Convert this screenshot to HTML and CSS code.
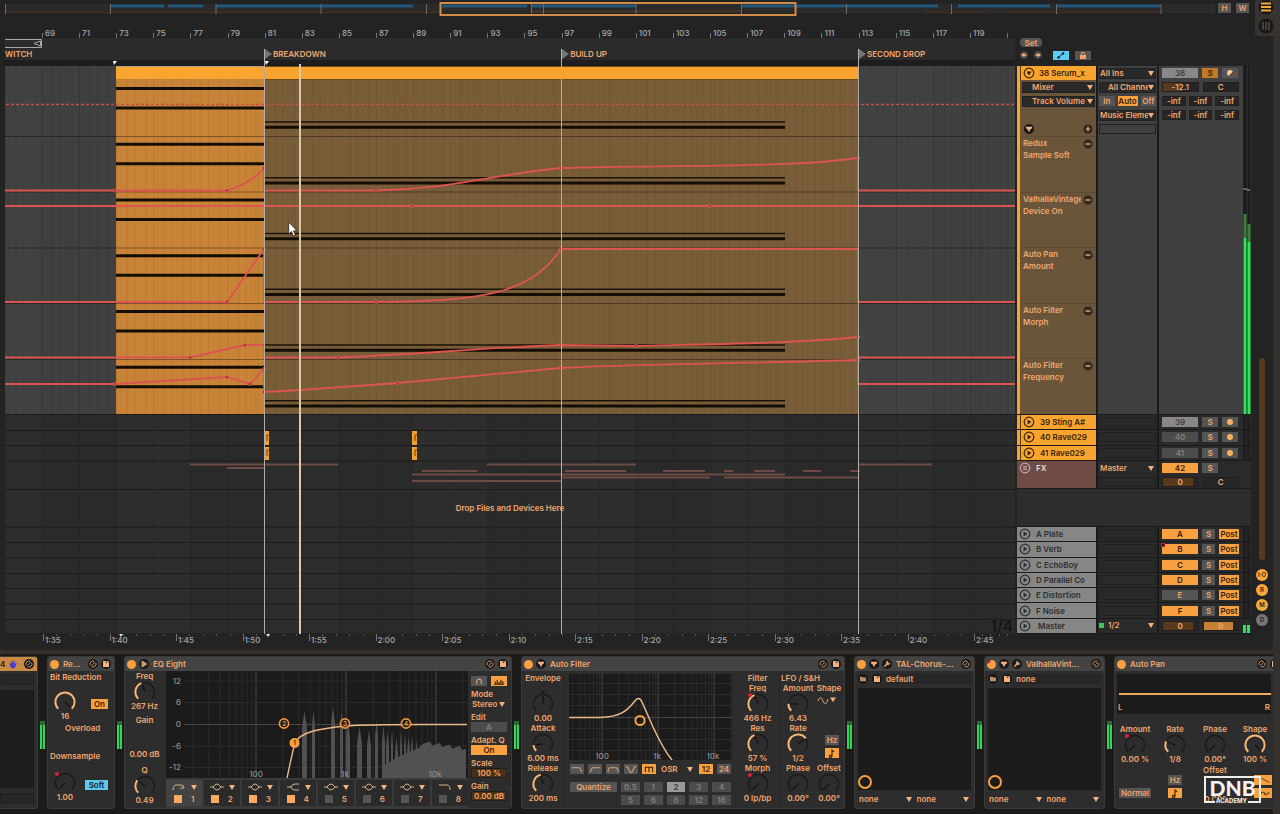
FILE: index.html
```html
<!DOCTYPE html>
<html lang="en">
<head>
<meta charset="utf-8">
<title>Arrangement</title>
<link rel="stylesheet" href="styles.css">
</head>
<body>
<svg class="sprite" aria-hidden="true">
  <symbol id="i-play" viewBox="0 0 12 12"><circle cx="6" cy="6" r="4.8" fill="none" stroke="currentColor" stroke-width="1.2"/><path d="M4.6 3.6v4.8L8.4 6z" fill="currentColor"/></symbol>
  <symbol id="i-fold" viewBox="0 0 12 12"><circle cx="6" cy="6" r="4.8" fill="none" stroke="currentColor" stroke-width="1.2"/><path d="M3.4 4.6h5.2L6 8.4z" fill="currentColor"/></symbol>
  <symbol id="i-group" viewBox="0 0 12 12"><circle cx="6" cy="6" r="4.8" fill="none" stroke="currentColor" stroke-width="1.2"/><path d="M4 4.5h4M4 6h4M4 7.5h4" stroke="currentColor" stroke-width=".9"/></symbol>
  <symbol id="i-swap" viewBox="0 0 10 10"><circle cx="5" cy="5" r="5" fill="#191919"/><path d="M2.2 6.2A3 3 0 0 1 6.4 2.4M7.8 3.8A3 3 0 0 1 3.6 7.6M3.6 6.6l3-3.2" fill="none" stroke="#c89a74" stroke-width="1"/></symbol>
  <symbol id="i-save" viewBox="0 0 10 10"><circle cx="5" cy="5" r="5" fill="#191919"/><path d="M2 2h5l1 1v5H2z" fill="#f5b27c"/><path d="M4.800 2.400h1.600v1.600H4.800z" fill="#4a3626"/></symbol>
  <symbol id="i-down" viewBox="0 0 10 10"><circle cx="5" cy="5" r="5" fill="#191919"/><path d="M2 2.800h6v1.400L5.800 6v1.600H4.200V6L2 4.200z" fill="#f0b27e"/></symbol>
  <symbol id="i-right" viewBox="0 0 10 10"><circle cx="5" cy="5" r="5" fill="#191919"/><path d="M2.500 2h1.800L8.600 5 4.300 8H2.500z" fill="#c89a74"/></symbol>
  <symbol id="i-wrench" viewBox="0 0 10 10"><circle cx="5" cy="5" r="5" fill="#191919"/><path d="M2.4 7.6L5.6 4.4" stroke="#d5a078" stroke-width="1.5"/><path d="M7.8 3.6A2 2 0 1 1 6.4 2.2L5.9 3.5l.6.6z" fill="#d5a078"/></symbol>
  <symbol id="i-folder" viewBox="0 0 10 10"><circle cx="5" cy="5" r="5" fill="#191919"/><path d="M2 2.800h2.400l.8.8H8V7.200H2z" fill="#b98f6e"/></symbol>
  <symbol id="i-plus" viewBox="0 0 10 10"><circle cx="5" cy="5" r="4.6" fill="#33291f"/><path d="M2.8 5h4.4M5 2.8v4.4" stroke="#d9b38e" stroke-width="1.2"/></symbol>
  <symbol id="i-minus" viewBox="0 0 10 10"><circle cx="5" cy="5" r="4.6" fill="#33291f"/><path d="M2.6 5h4.8" stroke="#d9b38e" stroke-width="1.4"/></symbol>
  <symbol id="i-note" viewBox="0 0 10 8"><path d="M5 6.4V1l2 1.6M5 6.4a1.2 1 0 1 1-1-.9z" fill="none" stroke="#3a2205" stroke-width="1"/></symbol>
</svg>

<header class="top">
  <svg class="overview" viewBox="5 0 1212 18" preserveAspectRatio="none" aria-hidden="true">
    <rect x="5" y="4" width="1210" height="9" fill="#2b2b2b"/>
    <path d="M5 12.5H440M925 12.5h60M1003 12.5h158" stroke="#442e23" stroke-width="1.500"/>
    <path d="M111 6h53M168 6h35M216 6h197M442 6h85M532 6h104M742 6h196M958 6h92M1056 6h104" stroke="#22567b" stroke-width="3"/>
    <path d="M532 11.5h104M636 11h106" stroke="#503529" stroke-width="1.500"/>
    <path d="M5.500 4v10M110.500 4v10M216 4v10M321 4v10M426.500 4v10M531.500 4v10M543.500 4v10M636 4v10M741.500 4v10M846.500 4v10M951.500 4v10M1056.500 4v10M1161 4v10" stroke="#6b6b6b"/>
    <rect x="440.500" y="3" width="355" height="12" fill="none" stroke="#cf8b48" stroke-width="2"/>
  </svg>
  <div class="zoomers"><button class="btn">H</button><button class="btn">W</button></div>
  <div class="rail-top">
    <svg viewBox="0 0 25 36" aria-hidden="true"><circle cx="11" cy="7" r="7.500" fill="#191919"/><path d="M6 3.500h10M6 7h10M6 10.500h10" stroke="#f5a83a" stroke-width="2"/><circle cx="11" cy="26" r="7.500" fill="#191919"/><path d="M8 22v8M11 22v8M14 22v8" stroke="#45403b" stroke-width="2"/></svg>
  </div>
</header>

<main class="arrange">
  <section class="canvas">
    <div class="bars" id="bars"></div>
    <div class="scrub">
      <svg class="loop" viewBox="0 0 37 9" aria-hidden="true"><path d="M0 .5h36.500v8H0M35.500 2v5L29 4.500z" fill="none" stroke="#a8a8a8"/></svg>
      <span class="locname">WITCH</span>
    </div>
    <div class="cue"></div>
    <svg class="lanes" viewBox="5 66 1010 568" preserveAspectRatio="none" aria-hidden="true">
      <defs>
        <pattern id="hatch" width="37.150" height="20" patternUnits="userSpaceOnUse" x="41.600">
          <path d="M.5 0v20M11.500 0v20M18.500 0v20M30.500 0v20" stroke="#000" stroke-opacity=".08"/>
          <path d="M4.500 0v20M9.500 0v20M23.500 0v20M27.500 0v20" stroke="#000" stroke-opacity=".04"/>
        </pattern>
        <pattern id="grid" width="148.600" height="20" patternUnits="userSpaceOnUse" x="115.900">
          <path d="M.5 0v20M37.600 0v20M74.800 0v20M111.900 0v20" stroke="#000" stroke-opacity=".09"/>
          <rect width="74" height="20" fill="#fff" fill-opacity=".012"/>
        </pattern>
      </defs>
      <rect x="5" y="66" width="1010" height="568" fill="#2a2a2a"/>
      <rect x="5" y="66" width="1010" height="348" fill="#404040"/>
      <rect x="5" y="66" width="1010" height="568" fill="url(#grid)"/>
      <rect x="5" y="66" width="1010" height="348" fill="url(#hatch)"/>
      <rect x="116" y="79" width="148" height="335" fill="#c98438"/>
      <rect x="116" y="79" width="148" height="335" fill="url(#hatch)"/>
      <rect x="264" y="79" width="594" height="335" fill="#795d38"/>
      <rect x="264" y="79" width="594" height="335" fill="url(#hatch)"/>
      <rect x="116" y="67" width="742" height="12" fill="#f9a42f"/>
      <path d="M116 66.500h148" stroke="#a6a29a"/>
      <path d="M264 66.500h594M264 79.500h594" stroke="#6a4a1c"/>
      <g id="notes"></g>
      <path d="M5 136.500h1010M5 192h1010M5 248h1010M5 303.500h1010M5 359.500h1010" stroke="#000" stroke-opacity=".35"/>
      <path d="M5 414.500h1010M5 430.500h1010M5 445.500h1010M5 461h1010M5 489.500h1010M5 527h1010M5 542.500h1010M5 558h1010M5 573.500h1010M5 588.500h1010M5 604h1010M5 619.500h1010M5 634h1010" stroke="#1c1c1c"/>
      <path d="M6 104.500h1009" stroke="#c25148" stroke-width="1.400" stroke-dasharray="3 2"/>
      <g fill="none" stroke="#dc5450" stroke-width="1.800">
        <path d="M5 190.500H227Q252 183 264 168V190.500H376C450 189 490 175 561 168C660 165 790 168 858 158V190.500H1015"/>
        <path d="M5 206H1015"/>
        <path d="M5 302H227L264 249V302H376C480 301 530 295 561 249H858V302H1015"/>
        <path d="M5 357.500H190L245 345H264V357.500H338C410 355 480 348 561 345L636 346C720 344 800 343 858 337V357.500H1015"/>
        <path d="M5 384H115L227 377L250 384L264 369V392L301 390L398 383L561 368C640 364 760 363 858 360V384H1015"/>
      </g>
      <g id="dots" fill="#7a3a2c" stroke="#e0574f"></g>
      <path d="M264 431h5v14h-5zM264 447h5v13h-5zM412 431h5v14h-5zM412 447h5v13h-5z" fill="#f0a02f"/>
      <path d="M266.500 435h2M267 435v6M266.500 450h2M267 450v6M415 435h2M415 435v6M415 450h2M415 450v6" stroke="#5e3f0e"/>
      <path d="M190 464.500H338M487 464.500H636M858 464.500H932M227 468H264M422 471H477M565 471H626M663 471H705M724 471H733M754 471H775M803 471H821M850 471H860M412 474.500H785M562 477.500H710M724 477.500H858M412 481H562" stroke="#6e4b45" stroke-width="2"/>
    </svg>
    <div class="times" id="times"></div>
    <div class="locator" style="left:25.64%"><span>BREAKDOWN</span></div>
    <div class="locator" style="left:55.07%"><span>BUILD UP</span></div>
    <div class="locator" style="left:84.45%"><span>SECOND DROP</span></div>
    <div class="playhead" style="left:29.15%"></div>
    <i class="start" style="left:10.7%"></i><i class="start" style="left:25.7%"></i>
    <i class="endmark" style="left:11.3%"></i><i class="endmark" style="left:25.8%"></i>
    <p class="drop">Drop Files and Devices Here</p>
    <span class="snap">1/4</span>
    <svg class="pointer" viewBox="0 0 10 16" aria-hidden="true"><path d="M.7 1v12l2.700-2.500 2 4.500 2-1-2-4.200H9z" fill="#fff" stroke="#2b2218" stroke-width=".8"/></svg>
  </section>

  <section class="tracks">
    <div class="setbar">
      <button class="btn set">Set</button>
      <div class="setrow">
        <button class="dotbtn" aria-label="Previous locator"><svg viewBox="0 0 8 8"><path d="M1 4l3.500-2.500v1.800H6.500v1.400H4.500v1.800z" fill="#f0b27e"/></svg></button><button class="dotbtn" aria-label="Next locator"><svg viewBox="0 0 8 8"><path d="M7 4L3.500 1.500v1.800H1.500v1.400h2v1.800z" fill="#f0b27e"/></svg></button>
        <button class="mode on" aria-label="Automation mode"><svg viewBox="0 0 16 9"><path d="M5 7l5-4.500" stroke="#123" stroke-width="1"/><circle cx="5.500" cy="6.500" r="1.300" fill="#123"/><circle cx="10" cy="2.500" r="1.300" fill="#123"/></svg></button>
        <button class="mode" aria-label="Lock envelopes"><svg viewBox="0 0 16 9"><path d="M5 4h6v4H5z" fill="#eda36a"/><path d="M6.300 4V3a1.700 1.700 0 0 1 3.400 0v1" fill="none" stroke="#eda36a"/></svg></button>
      </div>
    </div>
    <div class="tracklist">
      <div class="track main">
        <div class="head">
          <div class="title"><svg class="ic"><use href="#i-fold"/></svg>38 Serum_x</div>
          <div class="line"><span class="sel pad"><select aria-label="Device"><option>Mixer</option></select></span></div>
          <div class="line"><span class="sel pad"><select aria-label="Parameter"><option>Track Volume</option></select></span></div>
          <div class="line"></div>
          <div class="line ends"><svg class="ic sm"><use href="#i-down"/></svg><svg class="ic sm"><use href="#i-plus"/></svg></div>
          <div class="auto" id="auto"></div>
        </div>
        <div class="io">
          <div class="line"><span class="sel"><select aria-label="Audio from"><option>All Ins</option></select></span></div>
          <div class="line"><span class="sel ind"><select aria-label="Input channel"><option>All Channels</option></select></span></div>
          <div class="line tri"><button class="btn">In</button><button class="btn hot">Auto</button><button class="btn">Off</button></div>
          <div class="line"><span class="sel"><select aria-label="Audio to"><option>Music Elements</option></select></span></div>
          <div class="line"><span class="slot"></span></div>
        </div>
        <div class="mix">
          <div class="line"><button class="btn act grey">38</button><button class="btn solo hotsolo">S</button><button class="btn rec" aria-label="Arm"><i class="striped"></i></button></div>
          <div class="line"><span class="val vol">-12.1</span><span class="val">C</span></div>
          <div class="line three"><span class="val">-inf</span><span class="val">-inf</span><span class="val">-inf</span></div>
          <div class="line three"><span class="val">-inf</span><span class="val">-inf</span><span class="val">-inf</span></div>
          <svg class="bigmeter" viewBox="1242 66 9 348" preserveAspectRatio="none" aria-hidden="true"><path d="M1243 66h4v348h-4zM1247.500 66h3v348h-3z" fill="#1d1d1d"/><path d="M1243 189h4M1247 190h3" stroke="#aaa"/><path d="M1243.500 214h3v24h-3zM1247.500 224h3v18h-3z" fill="#3f7f3c"/><path d="M1243.500 238h3v176h-3zM1247.500 242h3v172h-3z" fill="#2ee55c"/></svg>
        </div>
      </div>
      <div class="grp orange" id="clips"></div>
      <div class="track fx">
        <div class="head"><div class="title"><svg class="ic"><use href="#i-group"/></svg>FX</div></div>
        <div class="io"><div class="line"><span class="sel bare"><select aria-label="FX output"><option>Master</option></select></span></div><div class="line"><span class="slot"></span></div></div>
        <div class="mix"><div class="line"><button class="btn act hot">42</button><button class="btn solo">S</button></div><div class="line"><span class="val level">0</span><span class="val">C</span></div></div>
      </div>
      <div class="void"></div>
      <div class="grp" id="returns"></div>
    </div>
    <div class="foot"></div>
  </section>

  <aside class="gutter">
    <i class="thumb"></i>
    <button>I·O</button><button>R</button><button>M</button><button class="off">D</button>
  </aside>
</main>

<section class="devices">
  <article class="device d-cut">
    <header class="gold">4<svg class="hand" viewBox="0 0 10 10"><path d="M1 4l2 1V1.500l1.200 2.500L5 .5l.8 3.500L7.500 1.500 7 5l2-1-2 4.500L5 9.500 3 8.500z" fill="#4a38d8"/></svg><svg class="ico end"><use href="#i-swap"/></svg></header>
    <div class="cutbody"><i></i><b></b><i></i></div>
  </article>
  <i class="meter"></i>

  <article class="device d-redux">
    <header><i class="power"></i><h2>Re...</h2><svg class="ico end"><use href="#i-swap"/></svg><svg class="ico"><use href="#i-save"/></svg></header>
    <div class="body redux">
      <h3>Bit Reduction</h3>
      <div class="pair"><div class="knob" data-value="16" data-v="1" data-name="Bits"></div><button class="btn hot">On</button></div>
      <p class="over">Overload</p>
      <h3>Downsample</h3>
      <div class="pair"><div class="knob" data-value="1.00" data-v="0" data-dot="1" data-name="Downsample"></div><button class="btn cyan">Soft</button></div>
    </div>
  </article>
  <i class="meter"></i>

  <article class="device d-eq">
    <header><i class="power"></i><svg class="ico"><use href="#i-right"/></svg><h2>EQ Eight</h2><svg class="ico end"><use href="#i-swap"/></svg><svg class="ico"><use href="#i-save"/></svg></header>
    <div class="eqbody">
      <div class="eqleft">
        <div class="knob" data-label="Freq" data-value="267 Hz" data-v=".42"></div>
        <div class="plain"><span>Gain</span><span>0.00 dB</span></div>
        <div class="knob" data-label="Q" data-value="0.49" data-v=".3"></div>
      </div>
      <div class="eqmid">
        <svg class="graph" viewBox="166 672 302 107" role="img" aria-label="EQ curve">
          <rect x="166" y="672" width="302" height="107" fill="#1b1b1b"/>
          <g data-grid="256,90,192,467,672,779"></g>
          <path d="M184 682h283M184 703.500h283M184 747h283M184 768.500h283" stroke="#2a2a2a"/><path d="M184 725.500h283" stroke="#484848"/>
          <g id="spectrum" fill="#515151"></g>
          <path d="M287 779C290 765 292 755 295 744C300 733 318 730 345 727C370 725 400 725.500 467 725.500" fill="none" stroke="#e9b987" stroke-width="1.400"/>
          <circle cx="294.500" cy="744" r="5" fill="#f9a040"/>
          <g fill="#1b1b1b" fill-opacity=".6" stroke="#f2953a" stroke-width="1.600"><circle cx="284" cy="724.500" r="4.600"/><circle cx="345" cy="724.500" r="4.600"/><circle cx="406" cy="724.500" r="4.600"/></g>
          <g class="gnum"><text x="294.500" y="746" fill="#2b1a08">1</text><text x="284" y="727">2</text><text x="345" y="727">3</text><text x="406" y="727">4</text></g>
          <g class="glab r"><text x="181" y="685">12</text><text x="181" y="706">6</text><text x="181" y="728">0</text><text x="181" y="750">-6</text><text x="181" y="771">-12</text></g>
          <g class="glab"><text x="256" y="778">100</text><text x="345" y="778">1k</text><text x="435" y="778">10k</text></g>
        </svg>
        <div class="bands" id="bands"></div>
      </div>
      <div class="eqright">
        <div class="duo"><button class="btn" aria-label="Audition"><svg viewBox="0 0 15 9"><path d="M5 7V4.500a2.500 2.500 0 0 1 5 0V7M5 5v2.500M10 5v2.500" fill="none" stroke="#d5a078" stroke-width="1.200"/></svg></button><button class="btn hot" aria-label="Analyze"><svg viewBox="0 0 15 9"><path d="M2 7.500h11M3.500 7V4.500M5.500 7V3M7.500 7V5M9.500 7V2.500M11.500 7V4" stroke="#3a2205" stroke-width="1.200"/></svg></button></div>
        <h3>Mode</h3><span class="sel bare"><select aria-label="Mode"><option>Stereo</option></select></span>
        <h3>Edit</h3><button class="btn dim">A</button>
        <h3>Adapt. Q</h3><button class="btn hot">On</button>
        <h3>Scale</h3><span class="val brown">100 %</span>
        <h3>Gain</h3><span class="val brown">0.00 dB</span>
      </div>
    </div>
  </article>
  <i class="meter"></i>

  <article class="device d-filter">
    <header><i class="power"></i><svg class="ico"><use href="#i-down"/></svg><h2>Auto Filter</h2><svg class="ico end"><use href="#i-swap"/></svg><svg class="ico"><use href="#i-save"/></svg></header>
    <div class="fbody">
      <div class="kcol edge">
        <h3>Envelope</h3>
        <div class="knob nolabel" data-value="0.00" data-v="-1" data-name="Envelope amount"></div>
        <div class="knob" data-label="Attack" data-value="6.00 ms" data-v=".14"></div>
        <div class="knob" data-label="Release" data-value="200 ms" data-v=".45"></div>
      </div>
      <div class="fmid">
        <svg class="graph" viewBox="569 675 163 86" role="img" aria-label="Filter curve">
          <rect x="569" y="675" width="163" height="86" fill="#1b1b1b"/>
          <g data-grid="602,56,570,731,675,761"></g>
          <path d="M569 684.500h163M569 695.500h163M569 706.500h163M569 729.500h163M569 740.500h163M569 751.500h163" stroke="#2c2c2c"/><path d="M569 718.500h163" stroke="#444"/>
          <path d="M569 718.500h31C620 718 627 712 634 703Q639 696 642 703L653 728C660 743 667 755 672 761" fill="none" stroke="#e9b987" stroke-width="1.500"/>
          <circle cx="640" cy="721.500" r="4.600" fill="none" stroke="#f9a040" stroke-width="2"/>
          <g class="glab"><text x="602" y="760">100</text><text x="657" y="760">1k</text><text x="713" y="760">10k</text></g>
        </svg>
        <div class="ftypes">
          <button class="btn" aria-label="Lowpass"><svg viewBox="0 0 14 10"><path d="M1 3h8q2 0 3 5"/></svg></button>
          <button class="btn" aria-label="Highpass"><svg viewBox="0 0 14 10"><path d="M2 8q1-5 3-5h8"/></svg></button>
          <button class="btn" aria-label="Bandpass"><svg viewBox="0 0 14 10"><path d="M1.500 8q0-5 2-5h7q2 0 2 5"/></svg></button>
          <button class="btn" aria-label="Notch"><svg viewBox="0 0 14 10"><path d="M1 2h2l3 6h2l3-6h2"/></svg></button>
          <button class="btn hot" aria-label="Morph"><svg viewBox="0 0 14 10"><path d="M3 8V2.500h8V8M7 3v5"/></svg></button>
          <span class="sel bare"><select aria-label="Circuit"><option>OSR</option></select></span>
          <button class="btn hot">12</button><button class="btn">24</button>
        </div>
        <div class="quant"><button class="btn">Quantize</button><button class="btn dim">0.5</button><button class="btn dim">1</button><button class="btn pick">2</button><button class="btn dim">3</button><button class="btn dim">4</button>
        <span></span><button class="btn dim">5</button><button class="btn dim">6</button><button class="btn dim">8</button><button class="btn dim">12</button><button class="btn dim">16</button></div>
      </div>
      <div class="kcol">
        <h3>Filter</h3>
        <div class="knob" data-label="Freq" data-value="466 Hz" data-v=".42" data-dot="1"></div>
        <div class="knob" data-label="Res" data-value="57 %" data-v=".42"></div>
        <div class="knob" data-label="Morph" data-value="0 lp/bp" data-v="0" data-dot="1"></div>
      </div>
      <div class="lfo">
        <h3>LFO / S&amp;H</h3>
        <div class="knob" data-label="Amount" data-value="6.43" data-v=".17"></div>
        <div class="shape"><span>Shape</span><svg viewBox="0 0 20 8"><path d="M1 5q2.500-7 5 0t5-2" fill="none" stroke="#d5a078"/><path d="M13 1.500h6L16 6z" fill="#f0b27e"/></svg></div>
        <div class="knob" data-label="Rate" data-value="1/2" data-v=".7"></div>
        <div class="stack"><button class="btn">Hz</button><button class="btn hot" aria-label="Sync"><svg viewBox="0 0 10 8"><use href="#i-note"/></svg></button></div>
        <div class="knob" data-label="Phase" data-value="0.00°" data-v="0"></div>
        <div class="knob" data-label="Offset" data-value="0.00°" data-v="0"></div>
      </div>
    </div>
  </article>
  <i class="meter"></i>

  <article class="device d-plug">
    <header><i class="power"></i><svg class="ico"><use href="#i-down"/></svg><svg class="ico"><use href="#i-wrench"/></svg><h2>TAL-Chorus-...</h2><svg class="ico end"><use href="#i-swap"/></svg></header>
    <div class="plug"><div class="preset"><svg class="ico"><use href="#i-folder"/></svg><svg class="ico"><use href="#i-save"/></svg><span>default</span></div>
    <div class="xy"></div>
    <div class="two"><span class="sel bare"><select aria-label="Chorus X"><option>none</option></select></span><span class="sel bare"><select aria-label="Chorus Y"><option>none</option></select></span></div></div>
  </article>
  <i class="meter"></i>

  <article class="device d-plug">
    <header><i class="power mapped"></i><svg class="ico"><use href="#i-down"/></svg><svg class="ico"><use href="#i-wrench"/></svg><h2>ValhallaVint...</h2><svg class="ico end"><use href="#i-swap"/></svg></header>
    <div class="plug"><div class="preset"><svg class="ico"><use href="#i-folder"/></svg><svg class="ico"><use href="#i-save"/></svg><span>none</span></div>
    <div class="xy"></div>
    <div class="two"><span class="sel bare"><select aria-label="Reverb X"><option>none</option></select></span><span class="sel bare"><select aria-label="Reverb Y"><option>none</option></select></span></div></div>
  </article>
  <i class="meter"></i>

  <article class="device d-pan">
    <header><i class="power"></i><h2>Auto Pan</h2><svg class="ico end"><use href="#i-swap"/></svg><svg class="ico"><use href="#i-save"/></svg></header>
    <div class="panner">
      <div class="wave"><i></i><span>L</span><span>R</span></div>
      <div class="prow">
        <div class="knob" data-label="Amount" data-value="0.00 %" data-v="0" data-dot="1"></div>
        <div class="knob" data-label="Rate" data-value="1/8" data-v=".25"></div>
        <div class="knob" data-label="Phase" data-value="0.00°" data-v="0"></div>
        <div class="knob" data-label="Shape" data-value="100 %" data-v="1"></div>
      </div>
      <div class="prow low">
        <div class="cell bottom"><button class="btn normal">Normal</button></div>
        <div class="cell bottom"><button class="btn">Hz</button><button class="btn hot" aria-label="Sync"><svg viewBox="0 0 10 8"><use href="#i-note"/></svg></button></div>
        <div class="cell"><span>Offset</span><span class="last">0.00°</span></div>
        <div class="cell bottom wide"><button class="btn hot" aria-label="Saw"><svg viewBox="0 0 18 9"><path d="M6 1l11 6" stroke="#3a2205"/></svg></button><button class="btn hot" aria-label="Random"><svg viewBox="0 0 18 9"><path d="M4 5h3V3h4v3h3V4h4" fill="none" stroke="#3a2205"/></svg></button></div>
      </div>
      <div class="logo"><b>DNB</b><small>ACADEMY</small></div>
    </div>
  </article>
</section>
<script src="app.js"></script>
</body>
</html>
```
FILE: styles.css
```css
* { box-sizing: border-box; }
body {
  margin: 0; min-height: 100vh; display: flex; flex-direction: column;
  background: #34302b; color: #f0a76e; overflow: hidden;
  font: 600 8px/10px Inter, "Open Sans", sans-serif; white-space: nowrap;
}
h2, h3, p { margin: 0; font: inherit; }
button, select { font: inherit; color: inherit; border: 0; padding: 0; background: none; border-radius: 0; }
svg { display: block; }
.sprite { position: absolute; width: 0; height: 0; }
.btn { background: #555; color: #eda36a; height: 10px; text-align: center; overflow: hidden; display: grid; place-content: center; }
.btn svg { width: 14px; height: 9px; }
.hot { background: #f9a040; color: #3a2205; }
.cyan { background: #5cc9ee; color: #123; }
.dim { background: #4c4c4c; color: #808080; }
.pick { background: #999; color: #333; }
.sel { position: relative; display: block; flex: 1; min-width: 0; height: 11px; background: #2a2a2a; border: 1px solid #222; }
.sel select { appearance: none; display: block; width: calc(100% - 7px); height: 9px; line-height: 9px; overflow: hidden; outline: 0; }
.sel::after { content: ""; position: absolute; right: 1px; top: 2px; border: 3px solid transparent; border-top: 5px solid #f0b27e; border-bottom: 0; }
.sel.bare { background: none; border-color: transparent; }

/* overview */
.top { display: flex; height: 18px; background: #232323; padding-left: 5px; }
.overview { flex: 1; min-width: 0; height: 18px; }
.zoomers { display: flex; gap: 5px; padding: 3px 0 0 1px; width: 38px; }
.zoomers .btn { width: 13px; }
.rail-top { width: 25px; height: 18px; background: #38332e; position: relative; z-index: 2; }
.rail-top svg { width: 25px; height: 36px; background: #38332e; border-bottom-left-radius: 3px; }

/* arrangement */
.arrange { display: flex; background: #232323; padding-left: 5px; margin-right: 7px; border-radius: 0 0 4px 4px; padding-bottom: 2px; }
.canvas { flex: 1; min-width: 0; position: relative; display: flex; flex-direction: column; margin-right: 2px; }
.bars { display: grid; grid-template-columns: 37px repeat(26, 1fr) 8px; height: 20px; color: #a9a9a9; font-weight: 500; align-items: end; }
.bars span { height: 10px; padding-left: 3px; line-height: 10px; background: linear-gradient(#777, #777) 0 5px / 1px 5px no-repeat; }
.scrub { height: 22px; background: #2b2b2b; padding-top: 1px; }
.loop { width: 37px; height: 9px; }
.locname { display: block; line-height: 12px; }
.cue { height: 6px; background: #1e1e1e; }
.lanes { width: 100%; height: 568px; }
.times { display: grid; grid-template-columns: 38px repeat(14, 1fr) 41px; height: 14px; color: #a9a9a9; font-weight: 500; }
.times span { height: 10px; padding-left: 2px; line-height: 12px; background: linear-gradient(#777, #777) 0 0 / 1px 7px no-repeat, repeating-linear-gradient(90deg, #555 0 1px, transparent 1px 20%) 0 0 / 100% 2px no-repeat; }
.locator { position: absolute; top: 31px; bottom: 14px; border-left: 1px solid #b5aea2; }
.locator::before { content: ""; position: absolute; left: 0; top: 0; border: 5px solid transparent; border-left: 7px solid #757575; border-right: 0; }
.locator span { position: absolute; left: 8px; top: 0; }
.playhead { position: absolute; top: 46px; bottom: 14px; width: 2px; background: #d9cbaa; }
.start { position: absolute; top: 43px; border: 3px solid transparent; border-top: 4px solid #fff; border-bottom: 0; border-left-width: 1px; }
.endmark { position: absolute; bottom: 11px; border: 2px solid transparent; border-top: 3px solid #ddd; border-bottom: 0; }
.drop { position: absolute; left: 0; right: 0; top: 485px; text-align: center; }
.snap { position: absolute; right: 2px; bottom: 17px; font-size: 16px; line-height: 10px; font-weight: 400; color: #121212; }
.pointer { position: absolute; left: 28%; top: 203px; width: 10px; height: 16px; }

/* tracks */
.tracks { width: 234px; display: flex; flex-direction: column; }
.setbar { height: 48px; padding: 20px 0 0 3px; }
.set { width: 22px; height: 9px; border-radius: 4px; }
.setrow { display: flex; align-items: center; gap: 6px; height: 14px; margin-top: 1px; }
.dotbtn { width: 8px; height: 8px; border-radius: 50%; background: #444; }
.dotbtn + .mode { margin-left: 5px; }
.mode { width: 16px; height: 9px; background: #555; }
.mode.on { background: #5ccdf2; }
.tracklist { display: grid; grid-template-rows: 349px 46px 28px 38px 107px; }
.track { display: grid; grid-template-columns: 79px 59px 92px; column-gap: 2px; background: #1a1a1a; border-bottom: 1px solid #1a1a1a; min-height: 0; overflow: hidden; }
.io, .mix { background: #2a2a2a; min-width: 0; min-height: 0; }
.line { display: flex; align-items: center; height: 14px; padding: 0 1px; gap: 3px; }
.title { display: flex; align-items: center; gap: 4px; height: 14px; padding-left: 2px; color: #3a2608; }
.ic { width: 12px; height: 12px; flex: none; }
.ic.sm { width: 10px; height: 10px; }
.slot { flex: 1; height: 10px; border: 1px solid #222; }
.mix { position: relative; padding-left: 2px; }
.mix .line { gap: 4px; width: 79px; }
.mix .three { gap: 3px; }
.val { flex: 1; height: 10px; background: #262626; box-shadow: inset 0 0 0 1px #202020; text-align: center; }
.vol { background: linear-gradient(90deg, #583a1c 55%, #262626 0); }
.level { background: linear-gradient(90deg, #583a1c 84%, #262626 0); }
.mix .fill { background: linear-gradient(90deg, #c58136 84%, #262626 0); }
.act { width: 36px; flex: none; }
.grey { background: #888; color: #3d3d3d; }
.solo, .rec { width: 16px; flex: none; }
.hotsolo { background: #c27a26; color: #3a2205; }
.rec i { width: 6px; height: 6px; border-radius: 50%; background: #f9b060; }
.rec .striped { background: linear-gradient(135deg, #f2c89a 60%, #7a4a20 0); }
.main .head { background: #6b553a; border-left: 3px solid #f9a42f; display: flex; flex-direction: column; }
.main .title { background: #f9a42f; border-left: 1px solid #5a3c10; gap: 4px; }
.main .line { flex: none; }
.main .io, .main .mix { background: #404040; }
.main .head .line { padding-left: 2px; }
.sel.pad select { padding-left: 9px; }
.sel.ind select { padding-left: 8px; }
.main .head .ends { justify-content: space-between; padding: 0 3px 0 4px; }
.tri .btn { flex: 1; }
.tri .hot { flex: none; width: 20px; }
.auto { flex: 1; display: grid; grid-auto-rows: 1fr; }
.auto div { border-top: 1px solid #5f4b33; padding: 0 3px; line-height: 12px; display: flex; justify-content: space-between; }
.auto p { width: 58px; overflow: hidden; }
.auto .ic { margin-top: 2px; }
.bigmeter { position: absolute; right: 0; top: 0; width: 9px; height: 100%; }
.grp { display: grid; grid-auto-rows: 1fr; }
.grp .title, .grp .line { height: 100%; }
.grp .head { background: #868686; }
.grp .title { color: #2e2e2e; gap: 5px; }
.orange .head { background: #f9a42f; border-left: 3px solid #f9a42f; }
.orange .title { color: #3a2608; border-left: 1px solid #5a3c10; }
.grp .solo.small { width: 13px; }
.post { width: 20px; flex: none; }
.fx .head { background: #6e4b45; }
.fx .title { color: #e8dcd8; gap: 5px; }
.fx .title .ic { color: #c0a8a2; }
.void { background: #2d2d2d; border-bottom: 1px solid #1a1a1a; }
.mini { position: absolute; right: 1px; bottom: 0; width: 7px; height: 100%; background: linear-gradient(90deg, #1f1f1f 3px, transparent 3px 4px, #1f1f1f 4px); }
.mini.live { height: 8px; background: linear-gradient(90deg, #2ee55c 3px, transparent 3px 4px, #2ee55c 4px); }
.half { width: 5px; height: 5px; background: #3fc65c; flex: none; }
.mapdot { position: absolute; left: 2px; top: 1px; width: 4px; height: 4px; background: #2a0a10; border: 1px solid #c41e30; }
.gutter { width: 22px; display: flex; flex-direction: column; align-items: center; padding-top: 340px; gap: 3px; }
.thumb { width: 6px; height: 202px; border-radius: 3px; background: #553a22; margin-bottom: 6px; }
.gutter button { width: 12px; height: 12px; border-radius: 50%; background: #f5a93c; color: #3a2205; font-size: 6px; line-height: 12px; overflow: hidden; }
.gutter .off { background: #777; color: #222; }

/* devices */
.devices { display: flex; gap: 2px; margin: 4px 7px 0 0; padding: 2px 0 5px; flex: 1; background: #1d1b19; overflow: hidden; align-items: stretch; }
.device { flex: none; background: #2d2d2d; border: 1px solid #3a3a3a; border-radius: 3px; overflow: hidden; position: relative; display: flex; flex-direction: column; }
.device > header { display: flex; align-items: center; gap: 3px; height: 14px; flex: none; background: #434343; padding: 0 3px 0 2px; }
.device .end { margin-left: auto; }
.device h2 { margin-left: 1px; }
.ico { width: 10px; height: 10px; flex: none; }
.power { width: 9px; height: 9px; border-radius: 50%; background: #f9a040; flex: none; }
.power.mapped { background: radial-gradient(circle at 1px 1px, #c41e30 2px, #f9a040 3px); }
.meter { flex: none; width: 5px; height: 28px; margin-top: 65px; background: linear-gradient(#2b6a35 4px, transparent 4px), linear-gradient(90deg, #35d45c 2px, #1a5a28 2px 3px, #35d45c 3px); }
.d-cut { width: 38px; border-left: 0; border-radius: 0 3px 3px 0; }
.device > .gold { background: #c98a45; color: #2b1a08; padding: 0 3px 0 0; }
.hand { width: 10px; height: 10px; }
.cutbody { flex: 1; display: flex; flex-direction: column; gap: 5px; padding: 3px 3px 4px 0; }
.cutbody i { height: 11px; background: #272727; border: 1px solid #222; }
.cutbody b { flex: 1; background: #1d1d1d; }
.d-redux { width: 68px; }
.d-eq { width: 388px; }
.d-filter { width: 324px; }
.d-plug { width: 121px; }
.d-pan { width: 170px; }

.knob { position: relative; display: flex; flex-direction: column; align-items: center; width: 38px; }
.knob svg { width: 22px; height: 20px; overflow: visible; }
.knob input { position: absolute; inset: 10px 8px; margin: 0; width: 22px; height: 20px; opacity: 0; }
.knob output { height: 10px; }
.redux { padding: 1px 6px 0 2px; }
.pair { display: flex; justify-content: space-between; align-items: flex-start; padding-top: 9px; }
.pair .knob { width: 30px; }
.pair .btn { margin-top: 8px; min-width: 17px; }
.pair .cyan { width: 23px; }
.over { padding: 2px 0 0 15px; }
.over + h3 { margin-top: 18px; }
.over ~ .pair { padding-top: 11px; }

.eqbody { display: flex; flex: 1; }
.eqleft { width: 41px; padding-right: 2px; display: flex; flex-direction: column; align-items: center; }
.plain { display: flex; flex-direction: column; justify-content: space-between; align-items: center; height: 44px; margin: 4px 0 6px; }
.eqmid { flex: 1; background: #3a3a3a; }
.graph { width: 100%; }
.glab { font-size: 8px; font-weight: 500; fill: #8d8d8d; text-anchor: middle; }
.glab.r { text-anchor: end; }
.gnum { font-size: 6px; fill: #f2953a; text-anchor: middle; }
.bands { display: grid; grid-template-columns: repeat(8, 1fr); gap: 2px; padding-top: 2px; }
.band { background: #2b2b2b; height: 26px; padding: 1px 3px; }
.band:first-child { background: #434343; }
.band > div { display: flex; align-items: center; justify-content: space-around; height: 12px; }
.band .shapeic { width: 14px; height: 8px; }
.band input { appearance: none; width: 8px; height: 8px; margin: 0; background: #555; }
.band input:checked { background: #f9ab5c; }
.caret { border: 3px solid transparent; border-top: 5px solid #f0b27e; border-bottom: 0; }
.eqright { width: 43px; padding: 5px 4px 0 3px; display: flex; flex-direction: column; }
.eqright h3 { margin-top: 2px; }
.eqright .btn, .eqright .val, .eqright .sel { flex: none; margin-bottom: 1px; }
.eqright .sel { margin-bottom: 0; }
.duo { display: grid; grid-template-columns: 1fr 1fr; gap: 4px; }
.val.brown { background: #4c3016; }

.fbody { display: flex; flex: 1; padding-top: 2px; }
.kcol { width: 43px; display: flex; flex-direction: column; align-items: center; }
.kcol.edge { border-right: 1px solid #252525; }
.nolabel { padding-top: 10px; }
.fmid { width: 171px; padding: 1px 4px 0; }
.ftypes { display: flex; gap: 4px; padding: 4px 1px 7px; }
.ftypes .btn { width: 14px; flex: none; }
.ftypes svg { fill: none; stroke: #d5a078; stroke-width: 1.2; }
.ftypes .hot svg { stroke: #3a2205; }
.quant { display: grid; grid-template-columns: 47px repeat(5, 1fr); gap: 3px 4px; padding: 0 1px; }
.lfo { display: grid; grid-template-columns: 34px 28px; grid-template-rows: 10px repeat(3, 40px); border-left: 1px solid #252525; justify-items: center; padding-left: 1px; }
.lfo h3 { grid-column: span 2; justify-self: start; }
.shape svg { width: 20px; height: 8px; margin-top: 3px; }
.stack { display: grid; gap: 3px; align-content: end; padding: 0 0 5px 6px; }
.stack .btn, .cell .btn { width: 14px; }

.plug { flex: 1; display: flex; flex-direction: column; padding: 3px 3px 2px; gap: 4px; }
.preset { display: flex; gap: 4px; }
.preset span { flex: 1; background: #272727; }
.xy { flex: 1; background: #1c1c1c; position: relative; }
.xy::after { content: ""; position: absolute; left: 0; bottom: 1px; width: 10px; height: 10px; border: 2px solid #f9a040; border-radius: 50%; }
.two { display: grid; grid-template-columns: 1fr 1fr; gap: 2px; height: 12px; }

.panner { flex: 1; padding-top: 3px; }
.wave { position: relative; height: 40px; background: #1b1b1b; margin-left: 2px; width: 154px; padding: 28px 1px 0; display: flex; justify-content: space-between; }
.wave i { position: absolute; left: 2px; right: 0; top: 19px; height: 2px; background: #f0aa5c; }
.prow { display: grid; grid-template-columns: repeat(4, 40px); padding-top: 10px; justify-items: center; }
.prow.low { padding-top: 0; height: 42px; }
.cell { display: flex; flex-direction: column; gap: 4px; align-items: center; padding-top: 1px; }
.cell.bottom { justify-content: flex-end; padding-bottom: 8px; gap: 3px; }
.cell .last { margin-top: 15px; }
.cell .normal { width: 32px; }
.cell.wide .btn { width: 18px; margin-left: 15px; }
.logo { position: absolute; left: 89px; bottom: 5px; width: 57px; height: 27px; border: 2px solid #ececec; color: #f2f2f2; text-align: center; }
.logo b { display: block; font: 900 21px/20px Lato, sans-serif; }
.logo small { position: absolute; right: 11px; bottom: -3px; font: 700 6px/6px Inter, sans-serif; background: #3a3531; padding: 0 1px; }
```
FILE: app.js
```js
const byId = id => document.getElementById(id);

/* rulers */
let bars = '<i></i>';
for (let n = 69; n <= 119; n += 2) bars += `<span>${n}</span>`;
byId('bars').innerHTML = bars + '<span></span>';

let times = '<i></i>';
for (let s = 95; s <= 165; s += 5) times += `<span>${Math.floor(s / 60)}:${String(s % 60).padStart(2, '0')}</span>`;
byId('times').innerHTML = times;

/* MIDI notes repeat in every automation lane */
let notes = '';
for (let i = 0; i < 6; i++) {
  const y = i * 55.75;
  notes += `<path d="M116 ${88.5 + y}H264M116 ${108 + y}H264M264.500 ${127.3 + y}H785" stroke="#140d05" stroke-width="3"/>`;
  notes += `<path d="M264.500 ${122 + y}H785" stroke="#1c1208" stroke-width="1.600"/>`;
}
byId('notes').innerHTML = notes;

const points = [[115,190.5],[227,190.5],[264,168],[376,190.5],[561,168],[858,158],[412,206],[710,206],[227,302],[264,249],[376,302],[561,249],
  [190,357.5],[245,345],[338,357.5],[561,345],[636,346],[858,337],[115,384],[227,377],[250,384],[264,369],[264,392],[398,383],[561,368],[858,360]];
byId('dots').innerHTML = points.map(p => `<circle cx="${p[0]}" cy="${p[1]}" r="1.500"/>`).join('');

/* track headers */
byId('auto').innerHTML = [['Redux', 'Sample Soft'], ['ValhallaVintage', 'Device On'], ['Auto Pan', 'Amount'], ['Auto Filter', 'Morph'], ['Auto Filter', 'Frequency']]
  .map(a => `<div><p>${a[0]}<br>${a[1]}</p><svg class="ic sm"><use href="#i-minus"/></svg></div>`).join('');

const row = (name, io, mix) => `<div class="track"><div class="head"><div class="title"><svg class="ic"><use href="#i-play"/></svg>${name}</div></div>
  <div class="io"><div class="line">${io}</div></div><div class="mix">${mix}</div></div>`;

byId('clips').innerHTML = [['39', 'Sting A#', 'grey'], ['40', 'Rave029', 'dim'], ['41', 'Rave029', 'dim']].map(t =>
  row(`${t[0]} ${t[1]}`, '<span class="slot"></span>',
    `<div class="line"><button class="btn act ${t[2]}">${t[0]}</button><button class="btn solo">S</button><button class="btn rec" aria-label="Arm"><i></i></button></div><i class="mini"></i>`)).join('');

byId('returns').innerHTML = ['A Plate', 'B Verb', 'C EchoBoy', 'D Parallel Co', 'E Distortion', 'F Noise'].map(n =>
  row(n, '<span class="slot"></span>',
    `<div class="line"><button class="btn act ${n[0] === 'E' ? '' : 'hot'}">${n[0]}</button><button class="btn solo small">S</button><button class="btn post hot">Post</button></div>${n[0] === 'B' ? '<i class="mapdot"></i>' : ''}<i class="mini"></i>`)).join('') +
  row('&nbsp;Master', '<i class="half"></i><span class="sel bare"><select aria-label="Master output"><option>1/2</option></select></span>',
    '<div class="line"><span class="val level">0</span><span class="val fill">0</span></div><i class="mini live"></i>');

/* knobs: 270 degree sweep starting at the lower left */
const at = (v, r) => {
  const a = (135 + 270 * v) * Math.PI / 180;
  return `${(11 + r * Math.cos(a)).toFixed(2)} ${(11 + r * Math.sin(a)).toFixed(2)}`;
};
const arc = v => `M${at(0, 9.6)}A9.600 9.600 0 ${v > 2 / 3 ? 1 : 0} 1 ${at(v, 9.6)}`;
document.querySelectorAll('.knob').forEach((k, i) => {
  const d = k.dataset;
  const v = Number(d.v);
  const needle = v < 0 ? 0.5 : v;
  k.innerHTML = (d.label ? `<label for="knob${i}">${d.label}</label>` : '') +
    `<svg viewBox="0 0 22 20" aria-hidden="true"><path d="${arc(1)}" fill="none" stroke="#1c1c1c" stroke-width="1.600"/>` +
    (v > 0 ? `<path d="${arc(v)}" fill="none" stroke="#f7b877" stroke-width="2"/>` : '') +
    `<path d="M11 11L${at(needle, 8)}" stroke="#161616" stroke-width="1.400"/>` +
    (v < 0 ? '<path d="M9-2h4l-2 3z" fill="#161616"/>' : '') +
    (d.dot ? '<circle cx="3" cy="2" r="2" fill="#d81f3c"/>' : '') +
    `</svg><input type="range" id="knob${i}" aria-label="${d.label || d.name}" min="0" max="1" step="0.01" value="${needle}"><output for="knob${i}">${d.value}</output>`;
});

/* logarithmic frequency grids */
document.querySelectorAll('[data-grid]').forEach(g => {
  const [x100, decade, x0, x1, y0, y1] = g.dataset.grid.split(',').map(Number);
  let s = '';
  for (let e = 1; e < 5; e++) for (let m = 1; m < 10; m++) {
    const x = x100 + decade * (Math.log10(m) + e - 2);
    if (x >= x0 && x <= x1) s += `<path d="M${x.toFixed(1)} ${y0}V${y1}" stroke="${m === 1 ? '#484848' : '#2a2a2a'}"/>`;
  }
  g.innerHTML = s;
});

/* analyser: x, width, top */
const peaks = [[302,5,712],[312,3,711],[331,4,708],[340,3,712],[346,4,722],[357,5,728],[367,4,731],[375,3,722],[382,3,727],[386,3,732],[391,2,730],[395,3,738],[400,2,731],[404,2,733],[407,3,737],[411,2,735],[415,3,741],[419,3,744]];
const spec = peaks.map(p => `<path d="M${p[0]} 779V${p[2] + 16}L${p[0] + p[1] / 2} ${p[2]}L${p[0] + p[1]} ${p[2] + 16}V779z"/>`).join('');
let edge = 'M384 779V766L398 758L412 752L421 748';
for (let x = 422; x < 468; x += 2) edge += `L${x} ${(741 + (x - 421) * 0.15 + (x * 7 % 5)).toFixed(1)}`;
byId('spectrum').innerHTML = spec + `<path d="${edge}V779z"/>`;

/* EQ bands */
const bell = 'M0 4h3M11 4h3M3 4q4-6 8 0q-4 6-8 0';
const shapes = ['M1 7q0-5 3-5h5q3 0 3 3M8 5h4', bell, bell, 'M1 4h4M5 4q1-3 4-3h4M5 4q1 3 4 3h4', bell, bell, bell, 'M1 2h8q3 0 3 5'];
byId('bands').innerHTML = shapes.map((p, i) => `<div class="band"><div><svg class="shapeic" viewBox="0 0 14 8"><path d="${p}" fill="none" stroke="#d5b48e"/></svg><i class="caret"></i></div>
  <div><input type="checkbox" id="band${i}" ${i < 4 ? 'checked' : ''}><label for="band${i}">${i + 1}</label></div></div>`).join('');
```
